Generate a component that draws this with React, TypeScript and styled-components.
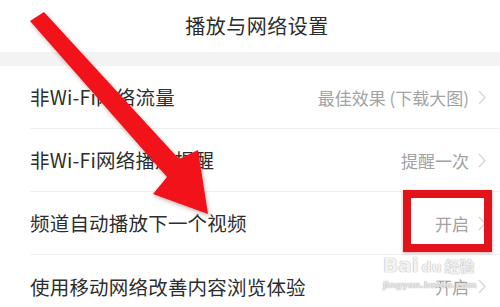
import styled, { createGlobalStyle } from 'styled-components'

const GlobalStyle = createGlobalStyle`
  html, body {
    margin: 0;
    padding: 0;
    background: #ffffff;
  }
  body {
    font-family: "Noto Sans CJK SC", "Noto Sans", sans-serif;
    overflow: hidden;
  }
`

const Screen = styled.div`
  position: relative;
  width: 500px;
  height: 307px;
  overflow: hidden;
  background: #ffffff;
`

const Header = styled.header`
  height: 52px;
  display: flex;
  align-items: center;
  justify-content: center;
  padding-left: 14px;
  box-sizing: border-box;
`

const Title = styled.h1`
  margin: 0;
  font-size: 20px;
  font-weight: 400;
  color: #2b2b2b;
  letter-spacing: 0.5px;
  line-height: 1;
`

const Band = styled.div`
  height: 14px;
  background: #f3f3f4;
`

const List = styled.ul`
  list-style: none;
  margin: 0;
  padding: 0;
`

const Row = styled.li<{ $last?: boolean }>`
  height: 63px;
  margin-left: 30px;
  padding-right: 14px;
  display: flex;
  align-items: center;
  justify-content: space-between;
  border-bottom: ${({ $last }) => ($last ? 'none' : '1px solid #efefef')};
  box-sizing: border-box;
`

const Label = styled.span`
  font-size: 19.5px;
  color: #2e2e2e;
  line-height: 1;
  letter-spacing: 0.2px;
`

const Value = styled.span`
  display: flex;
  align-items: center;
  gap: 9px;
  font-size: 17px;
  color: #a3a3a3;
  line-height: 1;
`

const Chevron = () => (
  <svg width="8" height="15" viewBox="0 0 8 15">
    <path d="M1 1 L7 7.5 L1 14" fill="none" stroke="#d6d6d6" strokeWidth="1.3" />
  </svg>
)

const Highlight = styled.div`
  position: absolute;
  left: 403px;
  top: 190px;
  width: 89px;
  height: 62px;
  border: 8px solid #e2131b;
  box-sizing: border-box;
  box-shadow: 0 1px 3px rgba(120, 0, 0, 0.35);
`

const Arrow = styled.svg`
  position: absolute;
  left: 0;
  top: 0;
  filter: drop-shadow(1px 2px 2px rgba(90, 0, 0, 0.3));
`

const Watermark = styled.div`
  position: absolute;
  left: 383px;
  top: 254px;
  display: flex;
  flex-direction: column;
  align-items: flex-start;
  color: rgba(255, 255, 255, 0.85);
  text-shadow: 0 0 1px #b0b0b0, 0 0 1px #b0b0b0;
  font-family: "DejaVu Sans", "Noto Sans CJK SC", sans-serif;
  pointer-events: none;
`

const MarkLine = styled.span`
  display: flex;
  align-items: baseline;
  font-size: 20px;
  font-weight: 700;
  line-height: 1.1;
`

const MarkDu = styled.span`
  font-size: 14px;
  margin: 0 2px;
  padding: 0 1px;
  border-radius: 6px;
`

const MarkCn = styled.span`
  font-family: "Noto Sans CJK SC", sans-serif;
  font-size: 15px;
`

const MarkSmall = styled.span`
  font-size: 9px;
  font-weight: 700;
  line-height: 1;
  margin-top: 5px;
  color: rgba(255, 255, 255, 0.7);
`

const rows = [
  { label: '非Wi-Fi网络流量', value: '最佳效果 (下载大图)' },
  { label: '非Wi-Fi网络播放提醒', value: '提醒一次' },
  { label: '频道自动播放下一个视频', value: '开启' },
  { label: '使用移动网络改善内容浏览体验', value: '开启' },
]

export default function App() {
  return (
    <>
      <GlobalStyle />
      <Screen>
        <Header>
          <Title>播放与网络设置</Title>
        </Header>
        <Band />
        <List>
          {rows.map((r, i) => (
            <Row key={r.label} $last={i === rows.length - 1}>
              <Label>{r.label}</Label>
              <Value>
                {r.value}
                <Chevron />
              </Value>
            </Row>
          ))}
        </List>
        <Highlight />
        <Watermark>
          <MarkLine>
            Bai<MarkDu>du</MarkDu>
            <MarkCn>经验</MarkCn>
          </MarkLine>
          <MarkSmall>jingyan.baidu.com</MarkSmall>
        </Watermark>
        <Arrow width="500" height="307" viewBox="0 0 500 307">
          <polygon
            points="30,21 44,12 179,159 198,150 208,214 153,194 167,177"
            fill="#f2131a"
          />
        </Arrow>
      </Screen>
    </>
  )
}
